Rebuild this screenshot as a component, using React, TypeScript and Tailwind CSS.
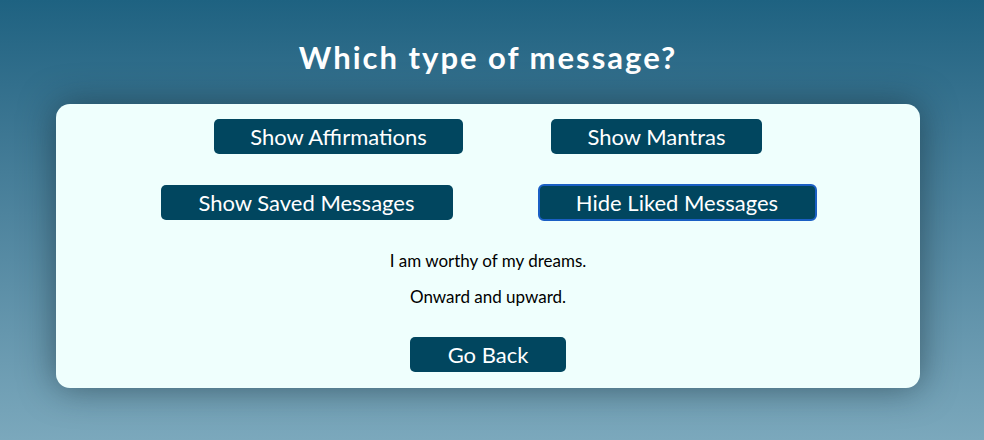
import React from "react";

export default function App() {
  const btn =
    "bg-[#01465f] text-white rounded-[5px] text-[22px] leading-none h-[35px] flex items-center justify-center";
  return (
    <div
      className="w-[984px] h-[440px] bg-gradient-to-b from-[#1e6281] to-[#7ba8bc]"
      style={{ fontFamily: "Lato, 'Noto Sans', sans-serif" }}
    >
      <div className="w-[976px] flex flex-col items-center">
        <h1 className="text-white text-[31px] font-bold tracking-[2px] mt-[38px] h-[38px] leading-[38px]">
          Which type of message?
        </h1>
        <div className="mt-[28px] w-[864px] h-[284px] bg-[#effffd] rounded-[14px] shadow-[0_0_35px_rgba(20,40,50,0.55)] flex flex-col items-center pt-[15px]">
          <div className="flex gap-[88px]">
            <button className={btn + " w-[249px]"}>Show Affirmations</button>
            <button className={btn + " w-[211px]"}>Show Mantras</button>
          </div>
          <div className="flex gap-[86px] mt-[31px]">
            <button className={btn + " w-[292px]"}>Show Saved Messages</button>
            <button
              className={
                btn + " w-[277px] outline outline-2 outline-[#1a5fc4] -outline-offset-1"
              }
            >
              Hide Liked Messages
            </button>
          </div>
          <p className="text-black text-[17px] mt-[31px] leading-[20px]">
            I am worthy of my dreams.
          </p>
          <p className="text-black text-[17px] mt-[16px] leading-[20px]">Onward and upward.</p>
          <button className={btn + " w-[156px] mt-[30px]"}>Go Back</button>
        </div>
      </div>
    </div>
  );
}
